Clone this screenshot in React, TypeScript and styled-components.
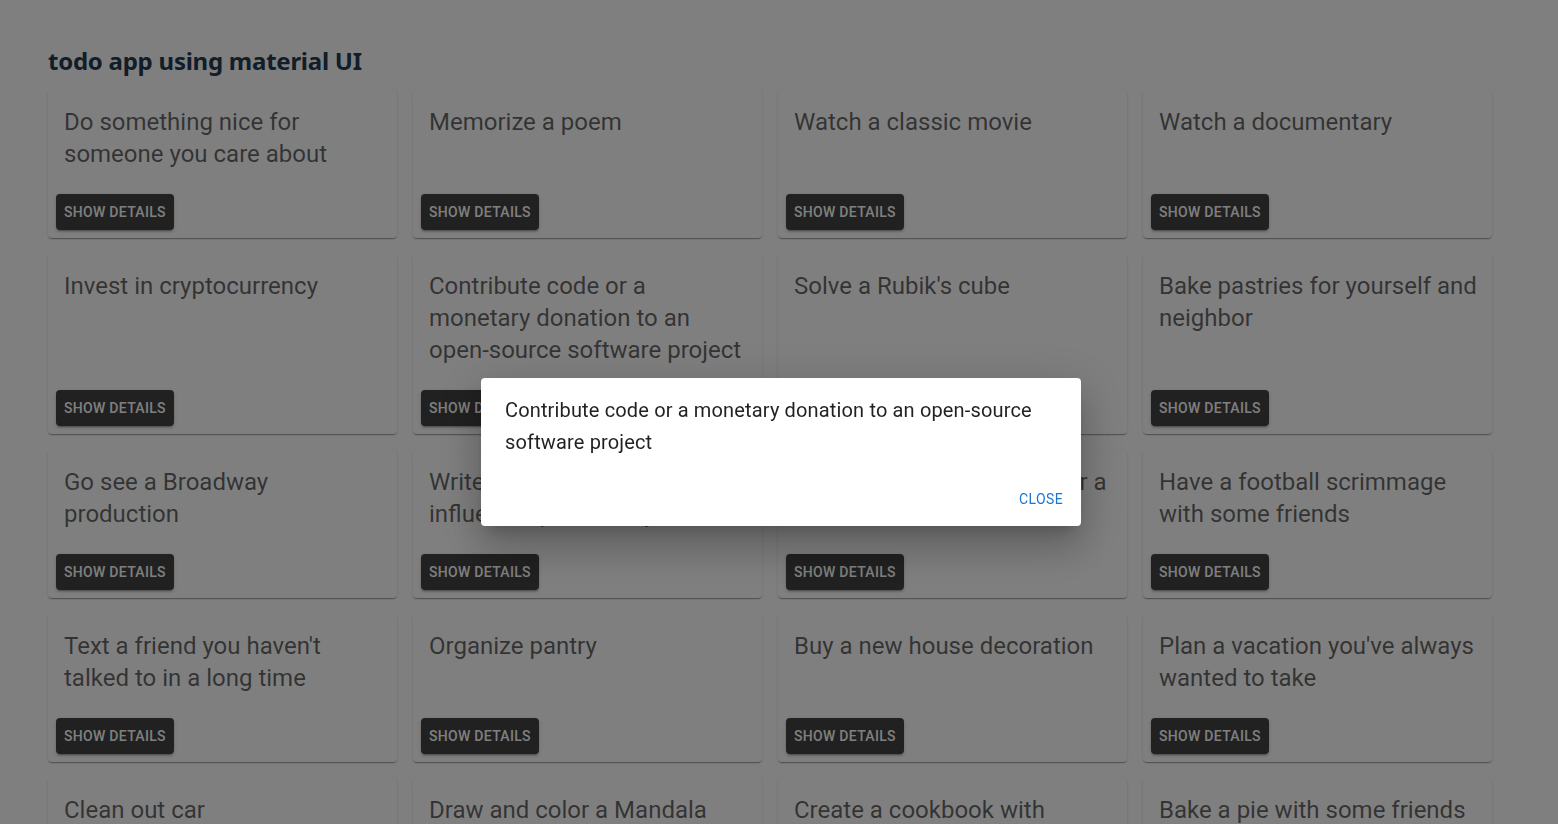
import React from "react";
import styled, { createGlobalStyle } from "styled-components";

const GlobalStyle = createGlobalStyle`
  html, body { margin: 0; padding: 0; background: #ffffff; overflow: hidden; }
  body { font-family: Roboto, "Liberation Sans", sans-serif; }
  * { box-sizing: border-box; }
`;

const Page = styled.main`
  padding: 45px 66px 0 48px;
`;

const Title = styled.h1`
  margin: 0 0 13px;
  font-family: "Noto Sans", "Open Sans", sans-serif;
  font-weight: 700;
  font-size: 24px;
  letter-spacing: -0.25px;
  line-height: 32px;
  color: #233b52;
`;

const Grid = styled.div`
  display: grid;
  grid-template-columns: repeat(4, 349px);
  gap: 16px;
`;

const Card = styled.div`
  background: #fff;
  border-radius: 4px;
  box-shadow: 0px 2px 1px -1px rgba(0,0,0,0.2), 0px 1px 1px 0px rgba(0,0,0,0.14), 0px 1px 3px 0px rgba(0,0,0,0.12);
  display: flex;
  flex-direction: column;
  justify-content: space-between;
`;

const CardContent = styled.div`
  padding: 16px 14px 16px 16px;
`;

const CardText = styled.div`
  font-family: Roboto, sans-serif;
  font-size: 24px;
  line-height: 32px;
  font-weight: 400;
  color: rgba(0,0,0,0.6);
`;

const CardActions = styled.div`
  padding: 8px;
  display: flex;
`;

const DarkButton = styled.button`
  border: 0;
  height: 36px;
  padding: 6px 8px;
  border-radius: 4px;
  background: #424242;
  color: #fff;
  font-family: Roboto, sans-serif;
  font-weight: 500;
  font-size: 14px;
  letter-spacing: 0.3px;
  text-transform: uppercase;
  box-shadow: 0px 3px 1px -2px rgba(0,0,0,0.2), 0px 2px 2px 0px rgba(0,0,0,0.14), 0px 1px 5px 0px rgba(0,0,0,0.12);
  cursor: pointer;
`;

const Backdrop = styled.div`
  position: fixed;
  inset: 0;
  background: rgba(0,0,0,0.5);
  display: flex;
  justify-content: center;
  align-items: flex-start;
  padding-top: 378px;
  padding-left: 4px;
`;

const Dialog = styled.div`
  width: 600px;
  background: #fff;
  border-radius: 4px;
  box-shadow: 0px 11px 15px -7px rgba(0,0,0,0.2), 0px 24px 38px 3px rgba(0,0,0,0.14), 0px 9px 46px 8px rgba(0,0,0,0.12);
  display: flex;
  flex-direction: column;
`;

const DialogContent = styled.div`
  padding: 16px 24px 15px;
  font-family: Roboto, sans-serif;
  font-size: 20px;
  letter-spacing: 0.15px;
  line-height: 32px;
  color: rgba(0,0,0,0.87);
`;

const DialogActions = styled.div`
  display: flex;
  justify-content: flex-end;
  padding: 8px 8px 9px;
`;

const TextButton = styled.button`
  border: 0;
  background: transparent;
  height: 36px;
  min-width: 64px;
  padding: 6px 8px;
  color: #1976d2;
  font-family: Roboto, sans-serif;
  font-weight: 400;
  font-size: 14px;
  letter-spacing: 0.4px;
  text-transform: uppercase;
  cursor: pointer;
`;

const todos = [
  "Do something nice for someone you care about",
  "Memorize a poem",
  "Watch a classic movie",
  "Watch a documentary",
  "Invest in cryptocurrency",
  "Contribute code or a monetary donation to an open-source software project",
  "Solve a Rubik's cube",
  "Bake pastries for yourself and neighbor",
  "Go see a Broadway production",
  "Write a thank you letter to an influential person in your life",
  "Catch up with a cousin over a lunch date",
  "Have a football scrimmage with some friends",
  "Text a friend you haven't talked to in a long time",
  "Organize pantry",
  "Buy a new house decoration",
  "Plan a vacation you've always wanted to take",
  "Clean out car",
  "Draw and color a Mandala",
  "Create a cookbook with favorite recipes",
  "Bake a pie with some friends",
];

export default function App() {
  return (
    <>
      <GlobalStyle />
      <Page>
        <Title>todo app using material UI</Title>
        <Grid>
          {todos.map((t) => (
            <Card key={t}>
              <CardContent>
                <CardText>{t}</CardText>
              </CardContent>
              <CardActions>
                <DarkButton>Show details</DarkButton>
              </CardActions>
            </Card>
          ))}
        </Grid>
      </Page>
      <Backdrop>
        <Dialog>
          <DialogContent>
            Contribute code or a monetary donation to an open-source software project
          </DialogContent>
          <DialogActions>
            <TextButton>Close</TextButton>
          </DialogActions>
        </Dialog>
      </Backdrop>
    </>
  );
}
